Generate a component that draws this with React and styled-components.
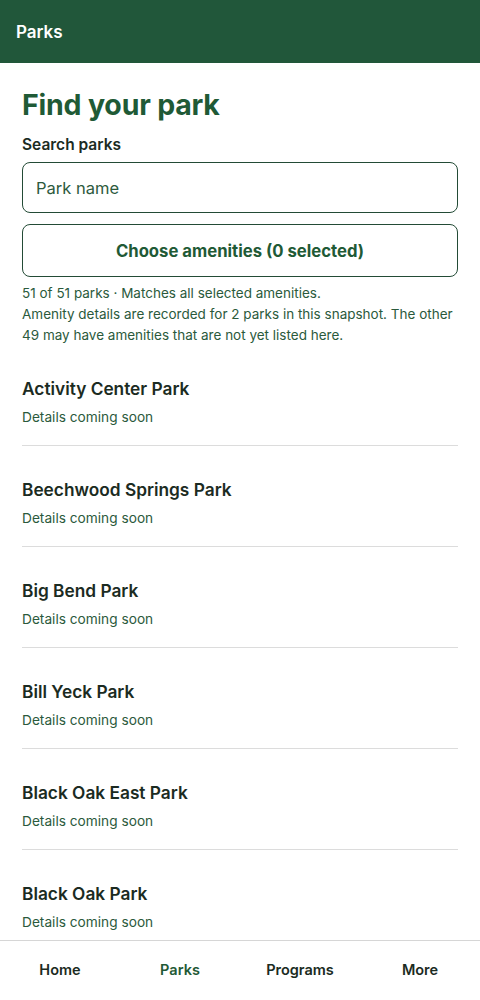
import React, { useState } from "react";
import styled, { createGlobalStyle } from "styled-components";

const GlobalStyle = createGlobalStyle`
  html, body {
    margin: 0;
    padding: 0;
    background: #fff;
  }
  * {
    box-sizing: border-box;
  }
  body {
    font-family: Inter, "Noto Sans", "Liberation Sans", sans-serif;
    color: #1b2b22;
  }
`;

const Page = styled.div`
  padding-bottom: 50px;
`;

const TopBar = styled.header`
  height: 63px;
  background: #21573a;
  display: flex;
  align-items: center;
  padding: 0 16px;
  color: #fff;
  font-size: 17px;
  font-weight: 600;
`;

const Main = styled.main`
  padding: 22px 22px 0;
`;

const Title = styled.h1`
  margin: 2px 0 0;
  font-size: 28.5px;
  line-height: 36px;
  font-weight: 700;
  color: #1f5a36;
  letter-spacing: -0.2px;
`;

const Label = styled.label`
  display: block;
  margin-top: 11px;
  font-size: 15.5px;
  line-height: 22px;
  font-weight: 600;
  color: #1b2b22;
`;

const SearchInput = styled.input`
  display: block;
  width: 100%;
  height: 51px;
  margin-top: 6px;
  padding: 0 13px;
  border: 1px solid #234b36;
  border-radius: 8px;
  font-family: inherit;
  font-size: 16.5px;
  color: #1b2b22;
  outline: none;
  &::placeholder {
    color: #2d5a3d;
  }
`;

const AmenityButton = styled.button`
  display: block;
  width: 100%;
  height: 53px;
  margin-top: 11px;
  border: 1px solid #234b36;
  border-radius: 8px;
  background: #fff;
  font-family: inherit;
  font-size: 16.7px;
  font-weight: 700;
  color: #1f5a36;
  cursor: pointer;
`;

const Status = styled.p`
  margin: 6px 0 0;
  font-size: 13.5px;
  line-height: 21px;
  color: #2b5a3c;
`;

const ParkList = styled.ul`
  list-style: none;
  margin: -1px 0 0;
  padding: 0;
`;

const ParkItem = styled.li`
  padding: 32px 0 18px;
  border-bottom: 1px solid #dcdcdc;
`;

const ParkName = styled.h2`
  margin: 0;
  font-size: 17.3px;
  line-height: 24px;
  font-weight: 600;
  color: #1b2b22;
`;

const ParkDetail = styled.p`
  margin: 6px 0 0;
  font-size: 13.7px;
  line-height: 20px;
  color: #2b5a3c;
`;

const BottomNav = styled.nav`
  position: fixed;
  left: 0;
  right: 0;
  bottom: 0;
  height: 60px;
  background: #fff;
  border-top: 1px solid #d6d6d6;
  display: grid;
  grid-template-columns: repeat(4, 1fr);
`;

const NavItem = styled.a`
  display: flex;
  align-items: center;
  justify-content: center;
  padding-bottom: 2px;
  font-size: 14.5px;
  font-weight: 600;
  color: ${({ $active }) => ($active ? "#1f5a36" : "#1b2b22")};
  text-decoration: none;
`;

const parks = [
  "Activity Center Park",
  "Beechwood Springs Park",
  "Big Bend Park",
  "Bill Yeck Park",
  "Black Oak East Park",
  "Black Oak Park",
];

const navItems = ["Home", "Parks", "Programs", "More"];

const App = () => {
  const [query, setQuery] = useState("");
  const selected = 0;

  return (
    <Page>
      <GlobalStyle />
      <TopBar>Parks</TopBar>
      <Main>
        <Title>Find your park</Title>
        <Label htmlFor="park-search">Search parks</Label>
        <SearchInput
          id="park-search"
          placeholder="Park name"
          value={query}
          onChange={(e) => setQuery(e.target.value)}
        />
        <AmenityButton>Choose amenities ({selected} selected)</AmenityButton>
        <Status>
          51 of 51 parks · Matches all selected amenities.
          <br />
          Amenity details are recorded for 2 parks in this snapshot. The other
          49 may have amenities that are not yet listed here.
        </Status>
        <ParkList>
          {parks
            .filter((p) => p.toLowerCase().includes(query.toLowerCase()))
            .map((p) => (
              <ParkItem key={p}>
                <ParkName>{p}</ParkName>
                <ParkDetail>Details coming soon</ParkDetail>
              </ParkItem>
            ))}
        </ParkList>
      </Main>
      <BottomNav>
        {navItems.map((n) => (
          <NavItem key={n} href="#" $active={n === "Parks"}>
            {n}
          </NavItem>
        ))}
      </BottomNav>
    </Page>
  );
};

export default App;
